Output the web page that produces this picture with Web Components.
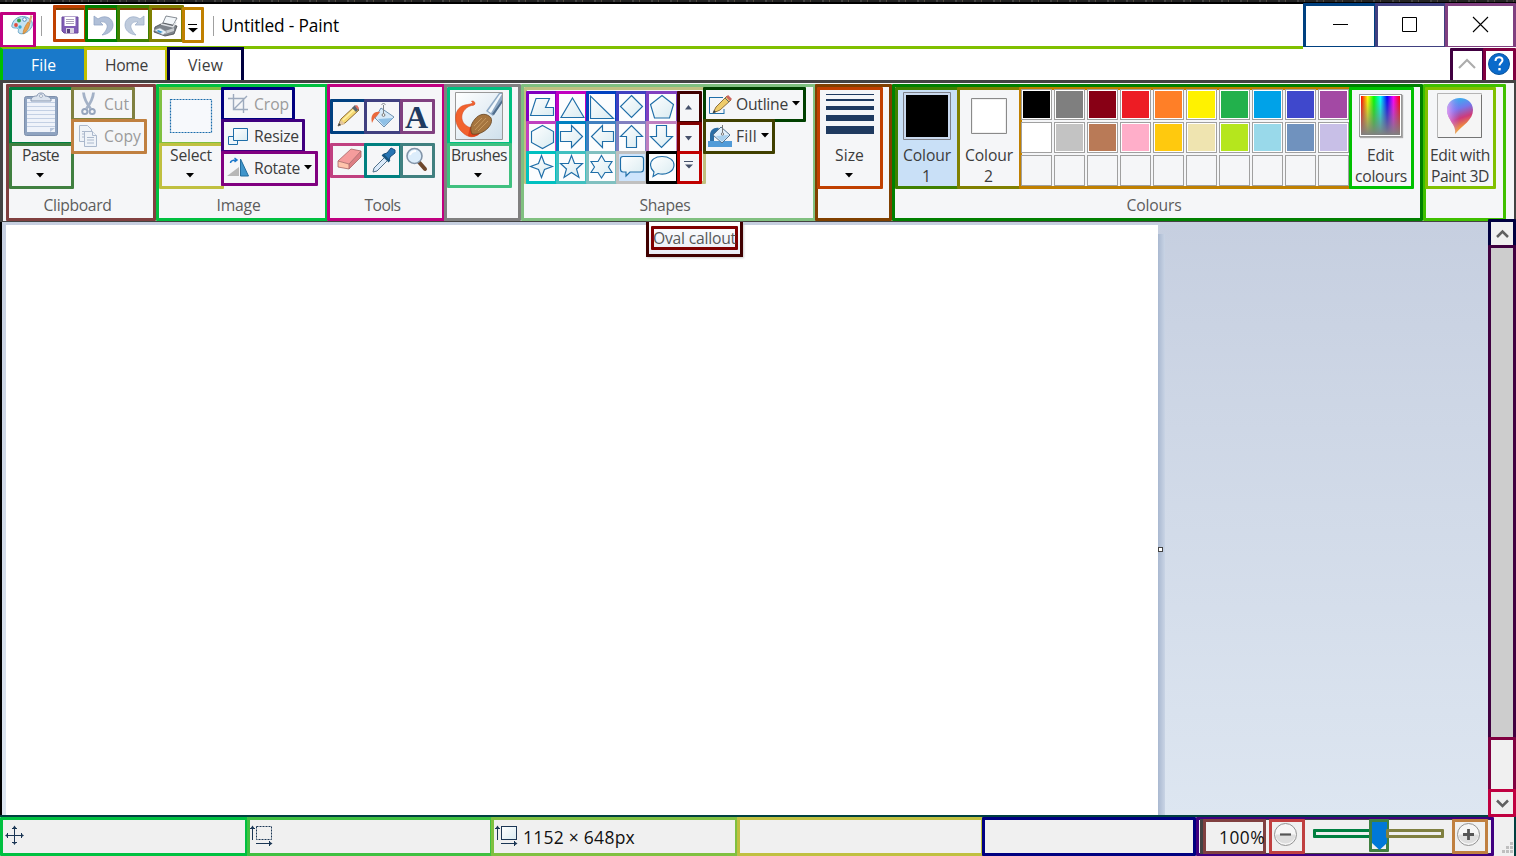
<!DOCTYPE html>
<html lang="en"><head><meta charset="utf-8"><title>Untitled - Paint</title>
<style>html,body{margin:0;width:1516px;height:856px;overflow:hidden;background:#fff;font-family:"Open Sans","Noto Sans",sans-serif}</style></head>
<body><paint-app></paint-app>
<script>
// Picture library: every icon is drawn in window coordinates, the viewBox selects its area.
const S='#1b3654', B='#1f6ea8';
const G=`<defs><linearGradient id="g" x1="0" y1="0" x2="1" y2="1"><stop stop-color="#fff"/><stop offset="1" stop-color="#d9ebf1"/></linearGradient></defs>`;
const shape=p=>G+`<path d="${p}" fill="url(#g)" stroke="${B}" stroke-width="1.15"/>`;
const ICONS={
 app:['9 14 26 22',`<path d="M12 25c1-6 8-10 14-8 6 2 8 7 5 11-3 5-9 7-12 5-2-1 1-4-2-5-3 0-6 0-5-3z" fill="#c4e2f1" stroke="#69a6c8"/><circle cx="16" cy="25" r="1.9" fill="#e34c3b"/><circle cx="19" cy="20.500" r="2" fill="#35a04b"/><circle cx="24.500" cy="19.500" r="1.800" fill="#fff" stroke="#518bbd"/><circle cx="20" cy="27" r="1.700" fill="#39a7d2"/><path d="M23 34c0-4 2-8 5-12l2 1c-1 5-3 9-7 11z" fill="#e9a14c" stroke="#bd7a2b" stroke-width=".6"/><path d="M28.500 22l2-7 2 1-2 7z" fill="#d9a878"/>`],
 save:['61 17 18 18',`<path d="M62 18h16v16h-14l-2-2z" fill="#7f5bb5" stroke="#6a4a9c"/><path d="M64.500 18h11v9h-11z" fill="#fff"/><path d="M66 20.500h8M66 22.500h8M66 24.500h8" stroke="#aaa1b9"/><path d="M66 29h8v5h-8z" fill="#d9d3e3"/><path d="M67 30h3v4h-3z" fill="#57407d"/>`],
 undo:['91 14 22 24',`<path d="M93 16v9h9l-3-3c5-1 8 2 7 6-1 3-3 5-5 7 7-1 11-5 11-10 0-7-8-11-15-6z" fill="#b0bfd7" stroke="#93a6c4" stroke-width=".8"/>`],
 redo:['123 14 22 24',`<path d="M143 16v9h-9l3-3c-5-1-8 2-7 6 1 3 3 5 5 7-7-1-11-5-11-10 0-7 8-11 15-6z" fill="#bfcbdc" stroke="#9eb0ca" stroke-width=".8"/>`],
 print:['153 14 27 23',`<path d="M166 16l11 2-5 9-10-2z" fill="#f3f7fa" stroke="#687078" stroke-width=".8"/><path d="M155 27l8-4 14 3-3 8-9 2-11-4z" fill="#7d838a" stroke="#44484d" stroke-width=".8"/><path d="M161 24l12 3 3-5" fill="none" stroke="#dde0e3" stroke-width="1.5"/><path d="M165 31l9-3v3l-9 3z" fill="#c9cdd1"/><path d="M154 30l6-2 7 4-4 3z" fill="#eaf1f6" stroke="#8e979f" stroke-width=".6"/><path d="M158 30l5 2-3 1-3-2z" fill="#3695cf"/>`],
 qat:['187 23 12 12',`<path d="M188 24.500h9" stroke="#000" stroke-width="1"/><path d="M188 28h10l-5 4.500z" fill="#000"/>`],
 min:['1332 15 18 18',`<path d="M1333 24.500h15" stroke="#000"/>`],
 max:['1400 15 18 18',`<path d="M1402.500 17.500h14v14h-14z" fill="none" stroke="#000"/>`],
 close:['1472 15 18 18',`<path d="M1473 17l15 15m0-15l-15 15" stroke="#000" stroke-width="1.1"/>`],
 caret:['1457 57 20 14',`<path d="M1459 68l8-8 8 8" fill="none" stroke="#acacac" stroke-width="2.100"/>`],
 help:['1487 53 24 24',`<circle cx="1499" cy="64" r="10.500" fill="#0a6acb" stroke="#0b559f"/><path d="M1495.500 61c0-5 7-5 7-.8 0 2.300-3 2.800-3 5.200" fill="none" stroke="#fff" stroke-width="2"/><path d="M1498.300 68h2.400v2.400h-2.400z" fill="#fff"/>`],
 paste:['22 92 38 46',`<rect x="24.500" y="96.500" width="33" height="39" rx="2" fill="#8fa3c0" stroke="#7d8fab"/><path d="M27 99h28v33H27z" fill="#eff3fa"/><path d="M27 102.500h28m-28 4h28m-28 4h28m-28 4h28m-28 4h28m-28 4h28m-28 4h28" stroke="#c3d0e4"/><path d="M50 132v-4h5z" fill="#b8c6dc"/><path d="M31 101v-2c2-3 4-3 6-3 0-4 8-4 8 0 3 0 4 1 6 3v2z" fill="#dbe3ee" stroke="#8797b0"/><circle cx="41" cy="96" r="1.500" fill="#fff" stroke="#8797b0" stroke-width=".7"/>`],
 cut:['80 91 16 25',`<path d="M83.500 92.500c.500 6 2.500 10 7 16M93.500 92.500c-.5 6-2.500 10-7 16" stroke="#a3b1c6" stroke-width="2.800" fill="none"/><circle cx="84.800" cy="111.500" r="2.600" fill="none" stroke="#96a5bd" stroke-width="2"/><circle cx="92.200" cy="111.500" r="2.600" fill="none" stroke="#96a5bd" stroke-width="2"/>`],
 copy:['78 124 21 24',`<g fill="#eff3f8" stroke="#abb8cc"><path d="M79.500 125.500h8l4 4v12h-12z"/><path d="M82 131.500h7m-7 2.500h7m-7 3h7"/><path d="M84.500 131.500h8l4 4v11h-12z"/><path d="M92.500 131.500v4h4M87 137.500h7m-7 2.500h7m-7 3h7"/></g>`],
 dash:['169 98 45 36',`<rect x="170.500" y="99.500" width="41" height="33" fill="#f7f9fc" stroke="#1b6cab" stroke-width="1.2" stroke-dasharray="2 1"/>`],
 crop:['227 93 22 22',`<path d="M228 98.500h15.500V113M233.500 94v15.500H248M234 109l13-13" fill="none" stroke="#9daabd" stroke-width="1.400"/>`],
 resize:['227 127 22 20',G+`<path d="M228.500 136.500h9v8h-9z" fill="#edf6fb" stroke="${B}"/><path d="M233.500 128.500h14v12h-14z" fill="url(#g)" stroke="${B}"/>`],
 rotate:['226 157 24 20',`<path d="M227 176l12-9v9z" fill="#b7b7b7"/><path d="M240.500 159l8 17h-8z" fill="#3f95cb" stroke="#226d9d"/><path d="M230.500 163c0-3 3-3 6-3m-2-2l2.500 2-2.500 2" fill="none" stroke="#1b77ca" stroke-width="1.500"/>`],
 pencil:['336 103 26 26',`<path d="M338 126l3-7 14-13 4 4-14 13z" fill="#f6da74" stroke="#8c6a33"/><path d="M343 120l13-12" stroke="#fff2a7" stroke-width="1.500"/><path d="M338 126l3-6 4 4z" fill="#e3c6a0"/><path d="M338 126l1-3 2 2z" fill="#27364c"/><path d="M352 108l4 4 3-3-4-4z" fill="#57646c"/><path d="M355 106l2-1 2 3-1 2z" fill="#df7064"/>`],
 bucket:['369 102 28 28',`<path d="M381 108l13 9-10 10-9-9z" fill="#d6e9f8" stroke="#6d8faf"/><path d="M378 119l15-1-9 8z" fill="#8fc0e6"/><path d="M383.500 105v9m-2-9c1-2 3-2 4 0" fill="none" stroke="#7d8288"/><circle cx="383.500" cy="115" r="1.400" fill="#fff" stroke="#777"/><path d="M372 123c-2-8 2-12 8-11l-3 4c-2 1-3 3-5 7z" fill="#e9683c"/>`],
 eraser:['336 147 27 24',`<path d="M338 161l13-12 10 2-12 13z" fill="#f59c9c"/><path d="M349 164l12-13v6l-12 12z" fill="#dd7f84"/><path d="M338 161l11 3v5l-11-2z" fill="#ffc4ac"/><path d="M338 161l13-12 10 2v6l-12 12-11-2zM338 161l11 3v5M349 164l12-13" fill="none" stroke="#a66464" stroke-width=".8"/>`],
 picker:['371 147 26 26',`<path d="M374 168l11-11 3 3-11 11-4 1z" fill="#dbeafa" stroke="#517189"/><path d="M384 154l3-1 4-5 4 2v3l-5 4-1 4-5-4z" fill="#2875b3" stroke="#174d7c"/><path d="M382.500 154.500l7 7" stroke="#185680" stroke-width="2.500"/>`],
 zoom:['405 146 24 26',`<path d="M418 161l7 8" stroke="#6e482d" stroke-width="4" stroke-linecap="round"/><circle cx="414.500" cy="156" r="7.500" fill="#dcedfb" stroke="#8294a8" stroke-width="1.600"/><path d="M410 155c1-3 3-4 6-4" stroke="#fff" stroke-width="2" fill="none"/>`],
 brush:['455 92 48 48',`<defs><linearGradient id="h" x1="0" y1="0" x2="1" y2="1"><stop stop-color="#fff"/><stop offset="1" stop-color="#cfe0ec"/></linearGradient></defs><path d="M455.500 92.500h47v47h-47z" fill="url(#h)" stroke="#999"/><path d="M486 111l13-18h3v10l-9 13z" fill="#8ea9c4"/><path d="M488 111l12-17h2l-11 19z" fill="#f2f8fc"/><path d="M494 115l8-12v-3l-10 14z" fill="#4f6d8c"/><path d="M475 104c-1 2-3 1-5 2-5 2-9 7-8 13 1 5 5 8 10 9l3 8c-4 2-9 0-13-4-8-7-9-21 0-26 4-2 7-1 11-3-1-1-2-2-1-2 2 0 3 1 3 3z" fill="#f2622e" stroke="#ce421a" stroke-width=".5"/><path d="M470 127c4-2 8 0 10 5 0 4-7 6-12 4z" fill="#e2431a"/><path d="M472 134c-2-4-2-9 3-15 4-5 10-6 14-3 4 2 3 8-1 12-5 5-11 7-16 6z" fill="#a5753f" stroke="#674522" stroke-width=".8"/><path d="M475 130l11-12m-8 13l10-10m-14 5l8-8" stroke="#cda066" stroke-width=".8"/>`],
 oicon:['708 96 24 22',`<path d="M709 98.500h14M724 110v5M709.500 98.500v16h14.500" stroke="${B}" fill="none"/><path d="M713 114l3-6 11-11 4 4-11 10z" fill="#efcc6a" stroke="#8e713b"/><path d="M713 114l1-3 2 2z" fill="#26394d"/><path d="M727 97l4 4" stroke="#cc655d" stroke-width="3"/><path d="M725 99l4 4" stroke="#56666d"/>`],
 ficon:['707 123 26 26',`<path d="M708 141h24v6h-24z" fill="#519bd8"/><path d="M710 141v-6c0-5 4-8 9-7l-3 5c-2 1-2 4-2 8z" fill="#2c6ea5"/><path d="M721 127l9 8-8 8-9-8z" fill="#e2f0fb" stroke="#54738f"/><path d="M716 136l13-1-7 7z" fill="#a8d0ee"/><path d="M722.500 125v8" stroke="#777"/><circle cx="722.500" cy="134" r="1.200" fill="#fff" stroke="#777"/>`],
 s0:['528 93 28 28',shape('M536 98.500h13.500l-4 9h8v8h-23z')],
 s1:['558 93 28 28',shape('M572.500 98l11.500 19.500h-23z')],
 s2:['588 93 28 28',shape('M590.500 96v22.500h23z')],
 s3:['618 93 28 28',shape('M631.500 95.500l11 11-11 11-11-11z')],
 s4:['648 93 28 28',shape('M662 95.500l11.500 9-4 13.500h-15l-4-13.500z')],
 s5:['528 123 28 28',shape('M542.500 125.500l11 6v11l-11 6-11-6v-11z')],
 s6:['558 123 28 28',shape('M560.500 131.500h11v-6l11 11-11 11v-6h-11z')],
 s7:['588 123 28 28',shape('M613.500 131.500h-11v-6l-11 11 11 11v-6h11z')],
 s8:['618 123 28 28',shape('M626.500 147.500v-11h-6l11-11 11 11h-6v11z')],
 s9:['648 123 28 28',shape('M656.500 125.500v11h-6l11 11 11-11h-6v-11z')],
 s10:['528 153 28 28',shape('M541.500 155.500l3 8 8 3-8 3-3 8-3-8-8-3 8-3z')],
 s11:['558 153 28 28',shape('M571.500 155.500l3 8h8l-6 5.500 2.500 8.500-7.500-5-7.500 5 2.500-8.500-6-5.500h8z')],
 s12:['588 153 28 28',shape('M601.500 155.500l3.500 6h7l-3.500 5.500 3.500 5.500h-7l-3.500 5.500-3.500-5.500h-7l3.500-5.500-3.500-5.500h7z')],
 s13:['618 153 28 28',shape('M623 156.500h18q2.500 0 2.500 2.500v10q0 3-2.500 3h-11l-4 4v-4h-3q-2.500 0-2.500-3v-10q0-2.500 2.500-2.500z')],
 s14:['648 153 28 28',shape('M654 172l-1 4.500 5-3c8 2 16-2 16-8.500 0-5-5-8.500-12-8.500s-11.500 3.500-11.500 8.500c0 3 1.500 5 3.500 7z')],
 up:['684 103 9 6','<path d="M685 108.500l3.500-4.500 3.500 4.500z" fill="#46516b"/>'],
 dn:['684 134 9 6','<path d="M685 135h7l-3.500 4.500z" fill="#46516b"/>'],
 more:['683 160 11 10','<path d="M684 161.500h9" stroke="#46516b"/><path d="M685 164.500h8l-4 4z" fill="#46516b"/>'],
 tri:['0 0 8 5','<path d="M0 0h8L4 4.500z" fill="#000"/>'],
 size:['826 93 48 42',`<path d="M826 94h48v1h-48zM826 99h48v2h-48zM826 106h48v4h-48zM826 115h48v6h-48zM826 126h48v8h-48z" fill="#1f3a60"/>`],
 c1:['903 92 48 48','<path d="M903.500 92.500h47v47h-47z" fill="#c9d9ef" stroke="#7f828b"/><path d="M906 95h42v42h-42z"/>'],
 c2:['971 98 36 36','<path d="M971.500 98.500h35v35h-35z" fill="#f0f0f0" stroke="#8a8a8a"/><path d="M973 100h32v32h-32z" fill="#fff"/>'],
 p3:['1437 93 46 46',`<defs><linearGradient id="a" x1="0" x2=".25" y1="0" y2="1"><stop stop-color="#20c8ee"/><stop offset=".38" stop-color="#7378ed"/><stop offset=".65" stop-color="#cf3a79"/><stop offset="1" stop-color="#ffba22"/></linearGradient><linearGradient id="b"><stop stop-color="#ffa1ef" stop-opacity=".8"/><stop offset=".5" stop-color="#9670ff" stop-opacity="0"/></linearGradient></defs><path d="M1437.500 93.500h44v44h-44z" fill="#f5f5f5" stroke="#b5b5b5"/><path d="M1438 137.500h43.500V95" fill="none" stroke="#747474"/><path d="M1447 110c0-16 26-16 26 0 0 10-10 15-18 24 2-9-8-14-8-24z" fill="url(#a)"/><path d="M1447 110c0-16 26-16 26 0 0 10-10 15-18 24 2-9-8-14-8-24z" fill="url(#b)"/>`],
 move:['4 825 21 20',`<path d="M14.500 827v17M6 835.500h17M12 828.500h5m-5 14h5M7.500 833v5m14-5v5" stroke="${S}"/><path d="M14.500 825.500l2 3h-4zM14.500 845l2-3h-4zM5 835.500l3-2v4zM24 835.500l-3-2v4z" fill="${S}"/>`],
 sel:['250 824 23 22',`<rect x="256.500" y="826.500" width="15" height="13" fill="none" stroke="${S}" stroke-dasharray="2 1"/><path d="M252.500 828v12M250 828.500h5M256 843.500h15M269.500 841v5" stroke="${S}"/><path d="M252.500 825.500l2 3h-4zM272.500 843.500l-3-2v4z" fill="${S}"/>`],
 dim:['495 824 23 22',G+`<rect x="501.500" y="826.500" width="15" height="13" fill="url(#g)" stroke="${S}"/><path d="M497.500 828v12M495 828.500h5M501 843.500h15M514.500 841v5" stroke="${S}"/><path d="M497.500 825.500l2 3h-4zM517.500 843.500l-3-2v4z" fill="${S}"/>`],
 minus:['1273 822 25 25','<circle cx="1285.500" cy="834.500" r="11" fill="#f6f6f6" stroke="#929292"/><path d="M1275.500 834.500a10 9 0 0020 0z" fill="#dedede"/><path d="M1280 834.500h11" stroke="#555" stroke-width="2.200"/>'],
 plus:['1456 822 25 25','<circle cx="1468.500" cy="834.500" r="11" fill="#f6f6f6" stroke="#929292"/><path d="M1458.500 834.500a10 9 0 0020 0z" fill="#dedede"/><path d="M1463 834.500h11m-5.500-5.500v11" stroke="#555" stroke-width="2.800"/>'],
 thumb:['1371 822 15 29','<path d="M1371 822h15v21l-7.500 7-7.500-7z" fill="#0078d7"/>'],
 grip:['1502 842 12 12','<path d="M1510 842h3v3h-3zM1506 846h3v3h-3zM1510 846h3v3h-3zM1502 850h3v3h-3zM1506 850h3v3h-3zM1510 850h3v3h-3z" fill="#bfbfbf"/>'],
 sup:['1496 229 13 12','<path d="M1497 238l5.500-5.500 5.500 5.500" fill="none" stroke="#606060" stroke-width="2.500"/>'],
 sdn:['1496 797 13 12','<path d="M1497 800.500l5.500 5.500 5.500-5.500" fill="none" stroke="#606060" stroke-width="2.500"/>'],
};
const px=(e,a)=>(e.getAttribute(a)||0)+'px';
customElements.define('g-icon',class extends HTMLElement{connectedCallback(){
 const [v,b]=ICONS[this.getAttribute('n')],d=v.split(' ');
 this.attachShadow({mode:'open'}).innerHTML=`<style>:host{display:block;flex:none;width:${d[2]}px;height:${d[3]}px;margin:${px(this,'mt')} 0 0 ${px(this,'ml')}}svg{display:block}</style><svg width="${d[2]}" height="${d[3]}" viewBox="${v}">${b}</svg>`;
}});
// Bordered box: w, h, c (outline colour), ml/mt offsets, f (fill)
customElements.define('r-box',class extends HTMLElement{connectedCallback(){
 this.attachShadow({mode:'open'}).innerHTML=`<style>:host{display:flex;flex:none;align-items:flex-start;box-sizing:border-box;width:${px(this,'w')};height:${px(this,'h')};border:3px solid ${this.getAttribute('c')};border-radius:1px;margin:${px(this,'mt')} 0 0 ${px(this,'ml')};background:${this.getAttribute('f')||'transparent'}}:host([col]){flex-direction:column}</style><slot></slot>`;
}});
// Label whose tracking is tuned to an exact advance width
customElements.define('fit-text',class extends HTMLElement{connectedCallback(){
 const w=+this.getAttribute('w'),s=this.getAttribute('s')||15.7,c=this.getAttribute('c')||'#3c3c3c';
 this.attachShadow({mode:'open'}).innerHTML=`<style>:host{display:block;flex:none;width:${w}px;height:20px;line-height:20px;font-size:${s}px;color:${c};white-space:pre;margin:${px(this,'mt')} 0 0 ${px(this,'ml')}}span{display:inline-block}</style><span><slot></slot></span>`;
 const sp=this.shadowRoot.querySelector('span');
 sp.style.letterSpacing=((w+1-sp.getBoundingClientRect().width)/this.textContent.length).toFixed(3)+'px';
}});
customElements.define('ribbon-group',class extends HTMLElement{connectedCallback(){
 this.attachShadow({mode:'open'}).innerHTML=`<style>:host{display:flex;flex:none;flex-direction:column;box-sizing:border-box;height:137px;width:${px(this,'w')};border:3px solid ${this.getAttribute('c')};border-radius:1px;margin-left:${px(this,'ml')};background:#f5f6f8}
 .b{display:flex;align-items:flex-start;height:108px}.l{display:flex;justify-content:center;padding-right:8px}</style><div class="b"><slot></slot></div><div class="l"><slot name="label"></slot></div>`;
}});
customElements.define('colour-grid',class extends HTMLElement{connectedCallback(){
 const c='#000 #7f7f7f #880015 #ed1c24 #ff7f27 #fff200 #22b14c #00a2e8 #3f48cc #a349a4 #fff #c3c3c3 #b97a57 #ffaec9 #ffc90e #efe4b0 #b5e61d #99d9ea #7092be #c8bfe7'.split(' ');
 this.attachShadow({mode:'open'}).innerHTML=`<style>:host{display:grid;grid-template-columns:repeat(10,31px);grid-auto-rows:31px;gap:2px;margin:-1px 0 0 -1px}i{box-sizing:border-box;border:1px solid #a0a0a0;padding:1px;background-clip:content-box}i.f{background-color:var(--k);box-shadow:inset 0 0 0 1px #fff}</style>`+Array.from({length:30},(_,i)=>`<i ${c[i]?`class="f" style="--k:${c[i]}"`:''}></i>`).join('');
}});
customElements.define('shape-gallery',class extends HTMLElement{connectedCallback(){
 const c='8000c0 c000c0 0040c0 4040c0 8040c0 c040c0 0080c0 4080c0 8080c0 c080c0 00c0c0 40c0c0 80c0c0 c0c0c0 000000'.split(' ');
 this.attachShadow({mode:'open'}).innerHTML=`<style>:host{display:grid;grid-template-columns:repeat(5,30px);grid-auto-rows:30px;margin:1px 0 0 -1px}</style>`+c.map((k,i)=>`<r-box w="${i%5==4?33:32}" h="33" c="#${k}" f="${i==13?'#cde4fc':'#fcfdfe'}"><g-icon n="s${i}" ml="-1" mt="-1"></g-icon></r-box>`).join('');
}});
customElements.define('title-bar',class extends HTMLElement{connectedCallback(){
 this.attachShadow({mode:'open'}).innerHTML=`<style>:host{display:block;height:48px;flex:none}.n{height:2px;background:repeating-linear-gradient(90deg,#222 0 5px,#444 5px 7px,#292929 7px 12px,#514a41 12px 13px,#222 13px 19px)}.k{height:2px;background:#000}.r{display:flex;align-items:flex-start;height:44px;box-sizing:border-box;background:#fff;border-bottom:2px solid #80c000}u{flex:none;width:1px;height:20px;background:#a0a0a0}.sp{flex:1}r-box.q{box-shadow:inset 0 2px 0 #804000}</style>
 <div class="n"></div><div class="k"></div><div class="r">
 <r-box w="36" h="36" c="#c00080" mt="8"><g-icon n="app" ml="6" mt="-1"></g-icon></r-box><u style="margin:12px 0 0 5px"></u>
 <r-box class="q" w="34" h="37" c="#c04000" ml="11" mt="1"><g-icon n="save" ml="5" mt="8"></g-icon></r-box>
 <r-box class="q" w="34" h="37" c="#008000" ml="-2" mt="1"><g-icon n="undo" ml="4" mt="6"></g-icon></r-box>
 <r-box class="q" w="34" h="37" c="#408000" ml="-2" mt="1"><g-icon n="redo" ml="4" mt="6"></g-icon></r-box>
 <r-box class="q" w="35" h="37" c="#808000" ml="-2" mt="1"><g-icon n="print" ml="1" mt="6"></g-icon></r-box>
 <r-box w="22" h="36" c="#c08000" ml="-2" mt="3"><g-icon n="qat" ml="2" mt="13"></g-icon></r-box>
 <u style="margin:12px 0 0 9px"></u><fit-text w="117" s="17.3" c="#000" ml="7" mt="12">Untitled - Paint</fit-text><div class="sp"></div>
 <r-box w="74" h="46" c="#004080" mt="-1"><g-icon n="min" ml="26" mt="9"></g-icon></r-box>
 <r-box w="72" h="46" c="#404080" ml="-2" mt="-1"><g-icon n="max" ml="22" mt="9"></g-icon></r-box>
 <r-box w="71" h="46" c="#804080" ml="-2" mt="-1"><g-icon n="close" ml="24" mt="9"></g-icon></r-box></div>`;
}});
customElements.define('tab-row',class extends HTMLElement{connectedCallback(){
 this.attachShadow({mode:'open'}).innerHTML=`<style>:host{display:flex;flex:none;align-items:flex-start;height:32px;overflow:hidden;background:linear-gradient(90deg,transparent 1303px,#fff 1303px) 0 0/100% 2px no-repeat,linear-gradient(#80c000 2px,#fff 2px);margin-top:-1px;padding-top:1px;height:32px}.sp{flex:1}.t{border:3px solid;border-bottom:0;box-sizing:border-box;height:33px;margin-top:-1px;display:flex;flex:none}.f{width:84px;background:#1979ca;border-color:#80c000 #1979ca #1979ca #00c000;border-width:2px 0 0 3px}.h{width:84px;background:#f5f6f8;border-color:#c0c000}.v{width:77px;border-color:#000040;margin-left:-1px}</style>
 <div class="t f"><fit-text w="24" c="#fff" ml="28" mt="6">File</fit-text></div><div class="t h"><fit-text w="42" ml="18" mt="5">Home</fit-text></div><div class="t v"><fit-text w="34" ml="18" mt="5">View</fit-text></div><div class="sp"></div>
 <r-box w="35" h="35" mt="0" c="#400040"><g-icon n="caret" ml="4" mt="6"></g-icon></r-box><r-box w="33" h="35" mt="0" ml="-2" c="#800040"><g-icon n="help" ml="1" mt="2"></g-icon></r-box>`;
}});
customElements.define('ribbon-bar',class extends HTMLElement{connectedCallback(){
 const L=(t,w)=>`<fit-text slot="label" w="${w}" c="#5c5c5c">${t}</fit-text>`;
 const D='#9b9b9b';
 const big=(t,w,ml,tri)=>`<fit-text w="${w}" ml="${ml}" mt="-1">${t}</fit-text><g-icon n="tri" ml="${tri}" mt="8"></g-icon>`;
 this.attachShadow({mode:'open'}).innerHTML=`<style>:host{display:flex;flex:none;box-sizing:border-box;height:142px;border:solid #434343;border-width:3px 2px 1px 3px;padding:1px 0 0 3px;background:#f5f6f8}.c{flex:none}.r{display:flex}</style>
 <ribbon-group w="150" c="#804040"><div class="c"><r-box w="65" h="58" c="#008040"><g-icon n="paste" ml="10" mt="2"></g-icon></r-box><r-box col w="65" h="46" mt="-2" c="#408040">${big('Paste',36,10,24)}</r-box></div>
 <div class="c" style="margin-left:-3px"><r-box w="64" h="34" c="#808040"><g-icon n="cut" ml="6" mt="1"></g-icon><fit-text w="24" c="${D}" ml="8" mt="4">Cut</fit-text></r-box><r-box w="76" h="35" mt="-2" c="#c08040"><g-icon n="copy" ml="4" mt="2"></g-icon><fit-text w="36" c="${D}" ml="5" mt="4">Copy</fit-text></r-box></div>${L('Clipboard',67)}</ribbon-group>
 <ribbon-group w="172" c="#00c040"><div class="c"><r-box w="65" h="58" c="#80c040"><g-icon n="dash" ml="7" mt="8"></g-icon></r-box><r-box col w="65" h="46" mt="-2" c="#c0c040">${big('Select',41,8,24)}</r-box></div>
 <div class="c" style="margin-left:-3px"><r-box w="74" h="34" c="#000080"><g-icon n="crop" ml="3" mt="3"></g-icon><fit-text w="34" c="${D}" ml="5" mt="4">Crop</fit-text></r-box><r-box w="84" h="34" mt="-2" c="#400080"><g-icon n="resize" ml="3" mt="5"></g-icon><fit-text w="44" ml="5" mt="4">Resize</fit-text></r-box><r-box w="97" h="35" mt="-2" c="#800080"><g-icon n="rotate" ml="2" mt="3"></g-icon><fit-text w="45" ml="4" mt="4">Rotate</fit-text><g-icon n="tri" ml="5" mt="11"></g-icon></r-box></div>${L('Image',43)}</ribbon-group>
 <ribbon-group w="118" ml="-1" c="#c00080"><div class="c"><div class="r" style="margin-top:12px"><r-box w="37" h="35" c="#004080"><g-icon n="pencil" ml="3" mt="1"></g-icon></r-box><r-box w="38" h="35" ml="-3" c="#404080"><g-icon n="bucket" ml="2" mt="0"></g-icon></r-box><r-box w="35" h="35" ml="-2" c="#804080"><span style="font:bold 32px/30px 'Liberation Serif',serif;color:#1f3a60;margin-left:2px">A</span></r-box></div>
 <div class="r" style="margin-top:9px"><r-box w="37" h="35" c="#c04080"><g-icon n="eraser" ml="3" mt="1"></g-icon></r-box><r-box w="38" h="35" ml="-3" c="#008080"><g-icon n="picker" ml="4" mt="1"></g-icon></r-box><r-box w="35" h="35" ml="-2" c="#408080"><g-icon n="zoom" ml="2" mt="0"></g-icon></r-box></div></div>${L('Tools',35)}</ribbon-group>
 <ribbon-group w="77" ml="-1" c="#808080"><div class="c"><r-box w="65" h="58" c="#00c080"><g-icon n="brush" ml="5" mt="2"></g-icon></r-box><r-box col w="65" h="45" mt="-2" c="#40c080">${big('Brushes',55,1,24)}</r-box></div></ribbon-group>
 <ribbon-group w="295" ml="0" c="#80c080"><r-box w="182" h="97" c="#c0c080"><shape-gallery></shape-gallery><div class="c" style="margin:1px 0 0 1px"><r-box w="25" h="33" c="#400000"><g-icon n="up" ml="4" mt="10"></g-icon></r-box><r-box w="25" h="32" mt="-2" c="#800000"><g-icon n="dn" ml="4" mt="10"></g-icon></r-box><r-box w="25" h="33" mt="-3" c="#c00000"><g-icon n="more" ml="3" mt="6"></g-icon></r-box></div></r-box>
 <div class="c" style="margin-left:-3px;position:relative"><r-box w="103" h="35" c="#004000"><g-icon n="oicon" ml="2" mt="5"></g-icon><fit-text w="51" ml="4" mt="4">Outline</fit-text><g-icon n="tri" ml="5" mt="11"></g-icon></r-box><r-box w="72" h="35" mt="-3" c="#404000"><g-icon n="ficon" ml="1" mt="1"></g-icon><fit-text w="20" ml="3" mt="4">Fill</fit-text><g-icon n="tri" ml="5" mt="11"></g-icon></r-box></div>${L('Shapes',50)}</ribbon-group>
 <ribbon-group w="77" ml="-1" c="#804000"><r-box col w="66" h="102" ml="-1" c="#c04000"><g-icon n="size" ml="6" mt="3"></g-icon><fit-text w="28" ml="15" mt="10">Size</fit-text><g-icon n="tri" ml="25" mt="8"></g-icon></r-box></ribbon-group>
 <ribbon-group w="531" c="#008000"><r-box col w="65" h="102" c="#408000" f="#c9e0f7"><g-icon n="c1" ml="5" mt="2"></g-icon><fit-text w="47" ml="5" mt="5">Colour</fit-text><fit-text w="8" ml="24" mt="1">1</fit-text></r-box><r-box col w="65" h="102" ml="-3" c="#808000"><g-icon n="c2" ml="11" mt="8"></g-icon><fit-text w="47" ml="5" mt="11">Colour</fit-text><fit-text w="8" ml="24" mt="1">2</fit-text></r-box>
 <r-box w="333" h="102" ml="-3" c="#c08000"><colour-grid></colour-grid></r-box>
 <r-box col w="65" h="102" ml="-3" c="#00c000"><div style="box-sizing:border-box;width:43px;height:43px;margin:4px 0 0 7px;border:1px solid #989898;padding:1px;background:linear-gradient(#80808000,#808080) content-box,linear-gradient(90deg,red,#ff0 17%,#0f0 33%,#0ff 50%,#00f 67%,#f0f 83%,red) content-box,#fff;box-shadow:1px 1px 1px #aaa"></div><fit-text w="26" ml="15" mt="8">Edit</fit-text><fit-text w="51" ml="3" mt="1">colours</fit-text></r-box>${L('Colours',54)}</ribbon-group>
 <ribbon-group w="83" c="#40c000"><r-box col w="71" h="102" ml="-1" c="#80c000"><g-icon n="p3" ml="9" mt="3"></g-icon><fit-text w="59" ml="2" mt="6">Edit with</fit-text><fit-text w="57" ml="3" mt="1">Paint 3D</fit-text></r-box></ribbon-group>`;
}});
customElements.define('work-area',class extends HTMLElement{connectedCallback(){
 this.attachShadow({mode:'open'}).innerHTML=`<style>:host{display:flex;flex:none;height:593px;position:relative;box-sizing:border-box;border-left:2px solid #000;background:linear-gradient(#c6cfe0,#dde6f1)}.p{width:1152px;margin:3px 0 0 4px;background:#fff}.s{width:7px;margin-top:12px;background:linear-gradient(90deg,#a9b8d0,#c9d4e5)}.sp{flex:1}.b{width:28px;margin-top:-3px}
 .hd{position:absolute;left:1156px;top:325px;width:5px;height:5px;box-sizing:border-box;border:1px solid #444;background:#fff}.tip{position:absolute;left:644px;top:0;width:97px;height:35px;box-sizing:border-box;border:solid #400000;border-width:0 3px 3px;background:linear-gradient(#fff,#e9edf5);padding:4px 0 0 2px;box-shadow:1px 1px 2px #ccc}</style>
 <div class="p"></div><div class="s"></div><div class="sp"></div><div class="b"><r-box w="28" h="29" c="#000040" f="#f0f0f0"><g-icon n="sup" ml="5" mt="6"></g-icon></r-box><r-box w="28" h="495" mt="-3" c="#400040" f="#cdcdcd"></r-box><r-box w="28" h="55" mt="-3" c="#800040" f="#f0f0f0"></r-box><r-box w="28" h="28" mt="-3" c="#c00040" f="#f0f0f0"><g-icon n="sdn" ml="5" mt="5"></g-icon></r-box></div>
 <div class="hd"></div><div class="tip"><r-box w="87" h="24" c="#800000"><fit-text w="82" c="#575757" ml="-1" mt="-1">Oval callout</fit-text></r-box></div>`;
}});
customElements.define('status-bar',class extends HTMLElement{connectedCallback(){
 this.attachShadow({mode:'open'}).innerHTML=`<style>:host{display:flex;flex:none;position:relative;height:41px;box-sizing:border-box;border:solid #004040;border-width:2px 2px 0 0;background:#f0f0f0}.z{border-left:3px solid #434343;border-top:1px solid #434343;border-bottom:1px solid #434343;margin-left:1px;height:35px;width:289px;box-sizing:border-box;display:flex;align-items:flex-start;margin-top:-1px}</style>
 <r-box w="248" h="39" c="#00c040"><g-icon n="move" ml="1" mt="5"></g-icon></r-box><r-box w="246" h="39" ml="-1" c="#40c040"><g-icon n="sel" mt="4"></g-icon></r-box><r-box w="247" h="39" ml="-2" c="#80c040"><g-icon n="dim" ml="1" mt="4"></g-icon><fit-text w="111" s="17.500" c="#111" ml="5" mt="7">1152 × 648px</fit-text></r-box><r-box w="247" h="39" ml="-1" c="#c0c040"></r-box><r-box w="214" h="39" ml="-2" c="#000080"></r-box>
 <r-box w="298" h="39" ml="0" c="#400080"><div class="z"><r-box w="63" h="35" c="#804040" mt="-1"><fit-text w="45" s="17.300" c="#111" ml="13" mt="6">100%</fit-text></r-box><r-box w="36" h="35" ml="3" c="#c04040" mt="-1"><g-icon n="minus" ml="1" mt="0"></g-icon></r-box>
 <r-box w="59" h="9" ml="8" mt="9" c="#008040"></r-box><r-box w="20" h="33" ml="-3" mt="-1" c="#408040" f="#f0f0f0"><g-icon n="thumb" ml="0" mt="0"></g-icon></r-box><r-box w="58" h="9" ml="-3" mt="9" c="#808040"></r-box><r-box w="36" h="35" ml="8" mt="-1" c="#c08040"><g-icon n="plus" ml="1" mt="0"></g-icon></r-box></div></r-box><g-icon n="grip" ml="8" mt="25"></g-icon>`;
}});
customElements.define('paint-app',class extends HTMLElement{connectedCallback(){
 this.attachShadow({mode:'open'}).innerHTML=`<style>:host{display:flex;flex-direction:column;width:1516px;height:856px;overflow:hidden}work-area{z-index:1}</style><title-bar></title-bar><tab-row></tab-row><ribbon-bar></ribbon-bar><work-area></work-area><status-bar></status-bar>`;
}});
</script></body></html>
